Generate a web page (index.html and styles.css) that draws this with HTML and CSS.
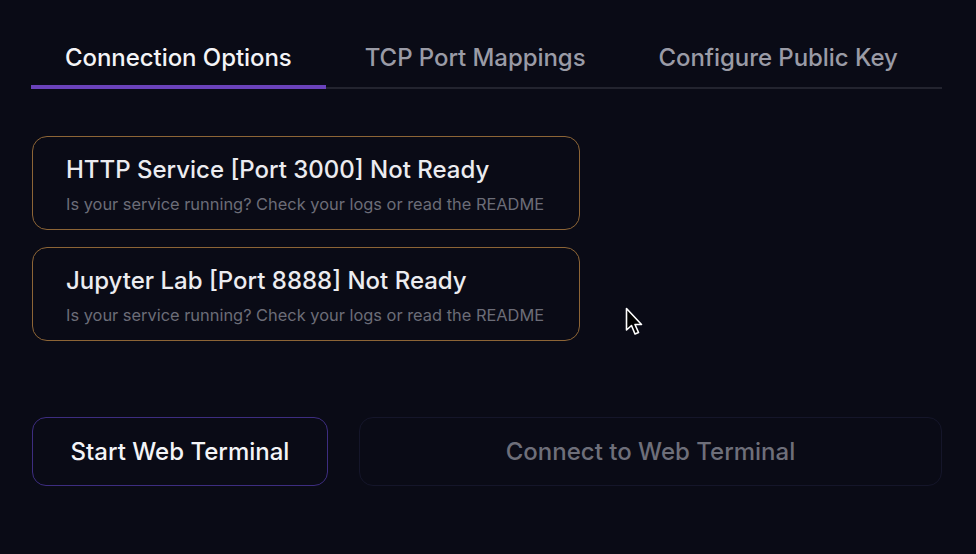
FILE: index.html
```html
<!DOCTYPE html>
<html>
<head>
<meta charset="utf-8">
<link rel="stylesheet" href="styles.css">
</head>
<body>
<div class="page">
  <nav class="tabs">
    <div class="tab active">Connection Options</div>
    <div class="tab">TCP Port Mappings</div>
    <div class="tab">Configure Public Key</div>
  </nav>
  <section class="services">
    <div class="card">
      <div class="card-title">HTTP Service [Port 3000] Not Ready</div>
      <div class="card-sub">Is your service running? Check your logs or read the README</div>
    </div>
    <div class="card">
      <div class="card-title">Jupyter Lab [Port 8888] Not Ready</div>
      <div class="card-sub">Is your service running? Check your logs or read the README</div>
    </div>
  </section>
  <div class="actions">
    <button class="btn btn-start">Start Web Terminal</button>
    <button class="btn btn-connect">Connect to Web Terminal</button>
  </div>
  <svg class="cursor" width="20" height="30" viewBox="0 0 20 30">
    <path d="M1.5 1.5 L1.5 23 L6.5 18.5 L10 27 L13.5 25.5 L10 17.5 L16.5 17.5 Z" fill="#000" stroke="#fff" stroke-width="1.6" stroke-linejoin="round"/>
  </svg>
</div>
</body>
</html>
```
FILE: styles.css
```css
html, body {
  margin: 0;
  padding: 0;
  background: #0a0b16;
}
body {
  font-family: Inter, "Noto Sans", sans-serif;
  color: #f2f2f5;
}
.page {
  position: relative;
  width: 976px;
  height: 554px;
  box-sizing: border-box;
  padding: 39px 34px 0 31px;
}
.tabs {
  display: flex;
  gap: 5px;
  border-bottom: 2px solid #23242f;
}
.tab {
  padding: 4px 34px 13px;
  font-size: 24px;
  line-height: 29px;
  font-weight: 500;
  letter-spacing: -0.06px;
  color: #9a9ba6;
  margin-bottom: -2px;
  border-bottom: 4px solid transparent;
}
.tab.active {
  color: #f4f4f7;
  border-bottom-color: #6a42bb;
}
.services {
  display: flex;
  flex-direction: column;
  gap: 17px;
  margin-top: 47px;
  margin-left: 1px;
  width: 548px;
}
.card {
  border: 1.5px solid #8d6536;
  border-radius: 15px;
  padding: 18px 33px 14px;
}
.card-title {
  font-size: 24px;
  font-weight: 500;
  color: #ececf0;
  line-height: 30px;
}
.card-sub {
  font-size: 16.4px;
  color: #6c6d78;
  margin-top: 8px;
  line-height: 22px;
}
.actions {
  display: flex;
  gap: 31px;
  margin-top: 76px;
  margin-left: 1px;
}
.btn {
  font-family: Inter, "Noto Sans", sans-serif;
  font-size: 24px;
  font-weight: 500;
  height: 69px;
  border-radius: 14px;
  background: transparent;
  cursor: pointer;
}
.btn-start {
  width: 296px;
  border: 1.5px solid #3d2d80;
  color: #f4f4f7;
}
.btn-connect {
  flex: 1;
  border: 1.5px solid #15162a;
  color: #6e6f7a;
}
.cursor {
  position: absolute;
  left: 625px;
  top: 307px;
}
```
